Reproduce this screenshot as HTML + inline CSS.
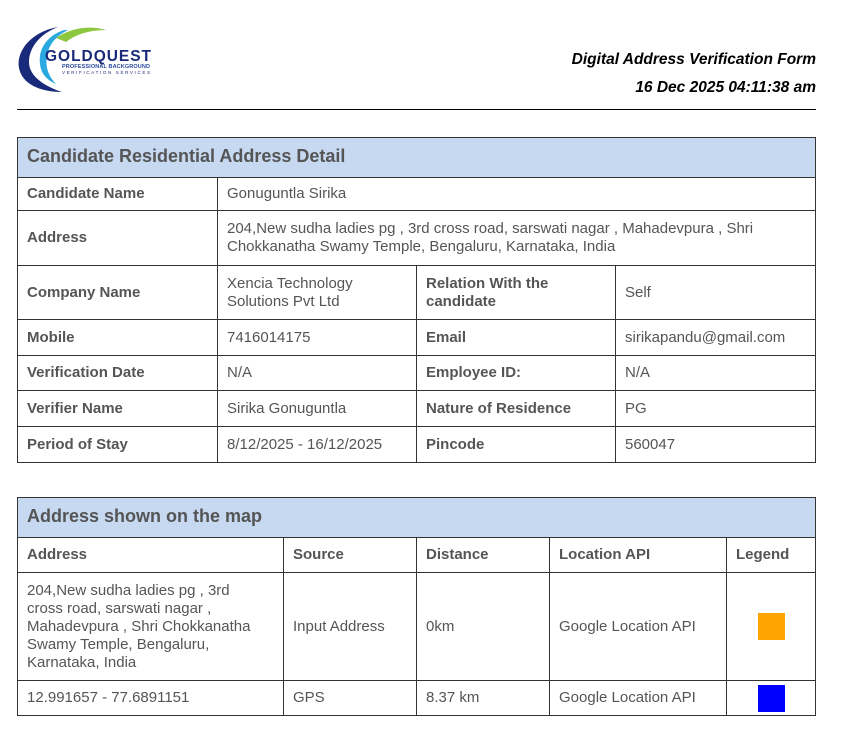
<!DOCTYPE html>
<html><head><meta charset="utf-8"><style>
*{margin:0;padding:0;box-sizing:border-box}
body{width:842px;height:732px;background:#fff;font-family:"Liberation Sans",Arial,sans-serif;position:relative;overflow:hidden;color:#555}
.t{position:absolute;font-style:italic;font-weight:bold;color:#000;font-size:15.5px;right:26px}
.hr{position:absolute;left:17px;top:109px;width:799px;height:1px;background:#000}
.c{position:absolute;border:1px solid #333;display:flex;align-items:center;padding:0 9px;font-size:15px;line-height:18px;color:#555}
.b{font-weight:bold}
.h{background:#c6d9f1;font-size:18px;font-weight:bold;padding-bottom:3px}
</style></head><body>
<svg style="position:absolute;left:14px;top:22px" width="145" height="74" viewBox="0 0 145 74">
<path d="M44 5 C16 10 2 30 5 46 C8 62 26 70 48 70 C30 64 15 54 15 40 C15 24 28 11 44 5Z" fill="#1a2a7a"/>
<path d="M50 8 C32 14 24 28 26 42 C27 52 33 58 42 62 C34 54 31 44 33 34 C35 22 42 14 54 8Z" fill="#29a9e0"/>
<path d="M42 16 C56 6 76 3 92 8 C76 8 62 12 52 20Z" fill="#8dc63f"/>
<text x="31" y="39" font-family="Liberation Sans" font-weight="bold" font-size="15.5" fill="#1a2a7a" textLength="106">GOLDQUEST</text>
<text x="48" y="46" font-family="Liberation Sans" font-weight="bold" font-size="5.5" fill="#2a4aa0" textLength="88">PROFESSIONAL BACKGROUND</text>
<text x="48" y="52" font-family="Liberation Sans" font-size="4.5" fill="#1a2a7a" textLength="88">VERIFICATION SERVICES</text>
</svg>
<div class="t" style="top:51px">Digital Address Verification Form</div>
<div class="t" style="top:79px">16 Dec 2025 04:11:38 am</div>
<div class="hr"></div>

<div class="c h" style="left:17px;top:137px;width:799px;height:41px">Candidate Residential Address Detail</div>
<div class="c b" style="left:17px;top:177px;width:201px;height:34px">Candidate Name</div>
<div class="c" style="left:217px;top:177px;width:599px;height:34px">Gonuguntla Sirika</div>
<div class="c b" style="left:17px;top:210px;width:201px;height:56px">Address</div>
<div class="c" style="left:217px;top:210px;width:599px;height:56px">204,New sudha ladies pg , 3rd cross road, sarswati nagar , Mahadevpura , Shri Chokkanatha Swamy Temple, Bengaluru, Karnataka, India</div>
<div class="c b" style="left:17px;top:265px;width:201px;height:55px">Company Name</div>
<div class="c" style="left:217px;top:265px;width:200px;height:55px">Xencia Technology Solutions Pvt Ltd</div>
<div class="c b" style="left:416px;top:265px;width:200px;height:55px">Relation With the candidate</div>
<div class="c" style="left:615px;top:265px;width:201px;height:55px">Self</div>
<div class="c b" style="left:17px;top:319px;width:201px;height:37px">Mobile</div>
<div class="c" style="left:217px;top:319px;width:200px;height:37px">7416014175</div>
<div class="c b" style="left:416px;top:319px;width:200px;height:37px">Email</div>
<div class="c" style="left:615px;top:319px;width:201px;height:37px">sirikapandu@gmail.com</div>
<div class="c b" style="left:17px;top:355px;width:201px;height:36px">Verification Date</div>
<div class="c" style="left:217px;top:355px;width:200px;height:36px">N/A</div>
<div class="c b" style="left:416px;top:355px;width:200px;height:36px">Employee ID:</div>
<div class="c" style="left:615px;top:355px;width:201px;height:36px">N/A</div>
<div class="c b" style="left:17px;top:390px;width:201px;height:37px">Verifier Name</div>
<div class="c" style="left:217px;top:390px;width:200px;height:37px">Sirika Gonuguntla</div>
<div class="c b" style="left:416px;top:390px;width:200px;height:37px">Nature of Residence</div>
<div class="c" style="left:615px;top:390px;width:201px;height:37px">PG</div>
<div class="c b" style="left:17px;top:426px;width:201px;height:37px">Period of Stay</div>
<div class="c" style="left:217px;top:426px;width:200px;height:37px">8/12/2025 - 16/12/2025</div>
<div class="c b" style="left:416px;top:426px;width:200px;height:37px">Pincode</div>
<div class="c" style="left:615px;top:426px;width:201px;height:37px">560047</div>

<div class="c h" style="left:17px;top:497px;width:799px;height:41px">Address shown on the map</div>
<div class="c b" style="left:17px;top:537px;width:267px;height:36px">Address</div>
<div class="c b" style="left:283px;top:537px;width:134px;height:36px">Source</div>
<div class="c b" style="left:416px;top:537px;width:134px;height:36px">Distance</div>
<div class="c b" style="left:549px;top:537px;width:178px;height:36px">Location API</div>
<div class="c b" style="left:726px;top:537px;width:90px;height:36px">Legend</div>
<div class="c" style="left:17px;top:572px;width:267px;height:109px"><div style="width:236px">204,New sudha ladies pg , 3rd cross road, sarswati nagar , Mahadevpura , Shri Chokkanatha Swamy Temple, Bengaluru, Karnataka, India</div></div>
<div class="c" style="left:283px;top:572px;width:134px;height:109px">Input Address</div>
<div class="c" style="left:416px;top:572px;width:134px;height:109px">0km</div>
<div class="c" style="left:549px;top:572px;width:178px;height:109px">Google Location API</div>
<div class="c" style="left:726px;top:572px;width:90px;height:109px;justify-content:center"><div style="width:27px;height:27px;background:#ffa500"></div></div>
<div class="c" style="left:17px;top:680px;width:267px;height:36px">12.991657 - 77.6891151</div>
<div class="c" style="left:283px;top:680px;width:134px;height:36px">GPS</div>
<div class="c" style="left:416px;top:680px;width:134px;height:36px">8.37 km</div>
<div class="c" style="left:549px;top:680px;width:178px;height:36px">Google Location API</div>
<div class="c" style="left:726px;top:680px;width:90px;height:36px;justify-content:center"><div style="width:27px;height:27px;background:#0000ff"></div></div>
</body></html>
